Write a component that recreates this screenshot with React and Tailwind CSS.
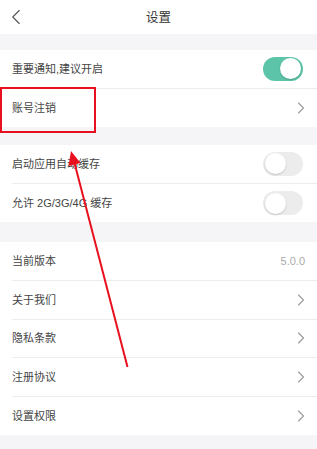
import { ChevronLeft } from 'lucide-react'

const font = { fontFamily: '"Liberation Sans", "Noto Sans CJK SC", sans-serif' }

function Chevron() {
  return (
    <svg width="8" height="12" viewBox="0 0 8 12" fill="none" className="mr-[12px]">
      <path d="M1.5 1L6.5 6L1.5 11" stroke="#9a9a9a" strokeWidth="1.1" strokeLinecap="round" strokeLinejoin="round" />
    </svg>
  )
}

function Toggle({ on }) {
  return (
    <div
      className={`mr-[14px] w-[40px] h-[24px] rounded-full flex items-center px-[2px] ${
        on ? 'bg-[#5cc4a8] justify-end' : 'bg-[#ececec] justify-start'
      }`}
    >
      <div className="w-[21px] h-[21px] rounded-full bg-white shadow-[0_1px_2px_rgba(0,0,0,0.18)]" />
    </div>
  )
}

function Row({ label, right, last }) {
  return (
    <div className="h-[38.6px] pl-[12px] flex">
      <div className={`flex-1 flex items-center justify-between ${last ? '' : 'border-b border-[#ececec]'}`}>
        <span className="text-[11px] text-[#444]">{label}</span>
        {right}
      </div>
    </div>
  )
}

function Section({ children }) {
  return <div className="bg-white">{children}</div>
}

export default function App() {
  return (
    <div className="relative w-[317px] h-[449px] bg-[#f5f5f7] overflow-hidden" style={font}>
      {/* Header */}
      <div className="h-[34px] bg-white flex items-center relative">
        <ChevronLeft className="absolute left-[3px] top-[4px] w-[26px] h-[26px] text-[#555]" strokeWidth={1} />
        <div className="flex-1 text-center text-[12.5px] text-[#333] pt-[2px]">设置</div>
      </div>

      <div className="h-[16px]" />
      <Section>
        <Row label="重要通知,建议开启" right={<Toggle on />} />
        <Row label="账号注销" right={<Chevron />} last />
      </Section>

      <div className="h-[18px]" />
      <Section>
        <Row label="启动应用自动缓存" right={<Toggle />} />
        <Row label="允许 2G/3G/4G 缓存" right={<Toggle />} last />
      </Section>

      <div className="h-[20px]" />
      <Section>
        <Row label="当前版本" right={<span className="mr-[12px] text-[11px] text-[#aaa]">5.0.0</span>} />
        <Row label="关于我们" right={<Chevron />} />
        <Row label="隐私条款" right={<Chevron />} />
        <Row label="注册协议" right={<Chevron />} />
        <Row label="设置权限" right={<Chevron />} last />
      </Section>

      {/* Annotation overlay */}
      <div className="absolute left-0 top-[87px] w-[96px] h-[46px] border-2 border-[#e8101e]" />
      <svg className="absolute left-0 top-0" width="317" height="449" viewBox="0 0 317 449">
        <line x1="127.5" y1="367" x2="74.5" y2="163" stroke="#e8101e" strokeWidth="2" />
        <polygon points="71,151 80.5,163 68.5,166" fill="#e8101e" />
      </svg>
    </div>
  )
}
